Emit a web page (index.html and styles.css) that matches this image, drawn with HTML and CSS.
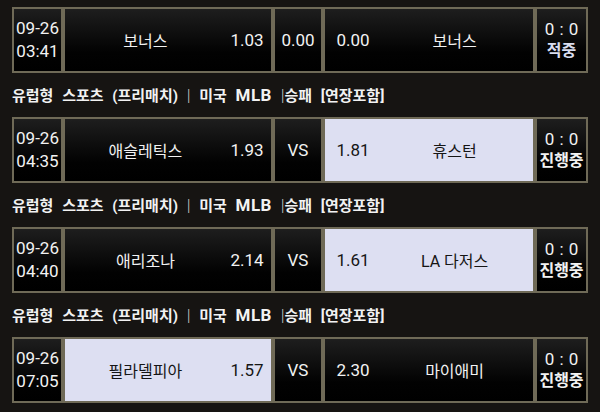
FILE: index.html
```html
<!DOCTYPE html>
<html lang="ko">
<head>
<meta charset="utf-8">
<link rel="stylesheet" href="styles.css">
</head>
<body>
<div class="list">
  <div class="match">
    <div class="cell time"><span>09-26</span><span>03:41</span></div>
    <div class="cell team home"><span class="name">보너스</span><span class="odds">1.03</span></div>
    <div class="cell vs">0.00</div>
    <div class="cell team away"><span class="odds">0.00</span><span class="name">보너스</span></div>
    <div class="cell score"><span class="num">0 : 0</span><span class="status hit">적중</span></div>
  </div>
  <div class="league">유럽형 스포츠 (프리매치) <span class="sep">|</span> 미국 <span class="latin">MLB</span> <span class="sep">|</span>승패 [연장포함]</div>

  <div class="match">
    <div class="cell time"><span>09-26</span><span>04:35</span></div>
    <div class="cell team home"><span class="name">애슬레틱스</span><span class="odds">1.93</span></div>
    <div class="cell vs">VS</div>
    <div class="cell team away picked"><span class="odds">1.81</span><span class="name">휴스턴</span></div>
    <div class="cell score"><span class="num">0 : 0</span><span class="status">진행중</span></div>
  </div>
  <div class="league">유럽형 스포츠 (프리매치) <span class="sep">|</span> 미국 <span class="latin">MLB</span> <span class="sep">|</span>승패 [연장포함]</div>

  <div class="match">
    <div class="cell time"><span>09-26</span><span>04:40</span></div>
    <div class="cell team home"><span class="name">애리조나</span><span class="odds">2.14</span></div>
    <div class="cell vs">VS</div>
    <div class="cell team away picked"><span class="odds">1.61</span><span class="name">LA 다저스</span></div>
    <div class="cell score"><span class="num">0 : 0</span><span class="status">진행중</span></div>
  </div>
  <div class="league">유럽형 스포츠 (프리매치) <span class="sep">|</span> 미국 <span class="latin">MLB</span> <span class="sep">|</span>승패 [연장포함]</div>

  <div class="match">
    <div class="cell time"><span>09-26</span><span>07:05</span></div>
    <div class="cell team home picked"><span class="name">필라델피아</span><span class="odds">1.57</span></div>
    <div class="cell vs">VS</div>
    <div class="cell team away"><span class="odds">2.30</span><span class="name">마이애미</span></div>
    <div class="cell score"><span class="num">0 : 0</span><span class="status">진행중</span></div>
  </div>
</div>
</body>
</html>
```
FILE: styles.css
```css
html, body {
  margin: 0;
  padding: 0;
  background: #161412;
}
body {
  width: 600px;
  height: 412px;
  overflow: hidden;
  font-family: Roboto, "Noto Sans CJK KR", sans-serif;
  color: #f2f2f2;
}
.list {
  padding: 7px 12px 0 12px;
}
.match {
  display: grid;
  grid-template-columns: 51px 210px 50px 212px 53px;
  height: 66px;
}
.cell {
  box-sizing: border-box;
  border: 2px solid #6f6a57;
  background: linear-gradient(#1e1e1e, #020202 70%, #000);
  display: flex;
  align-items: center;
  justify-content: center;
  font-size: 17px;
}
.time {
  flex-direction: column;
  line-height: 23px;
}
.team {
  display: grid;
  align-items: center;
}
.home {
  grid-template-columns: 170px 1fr;
}
.away {
  grid-template-columns: 1fr 170px;
}
.name {
  text-align: center;
  font-size: 16px;
}
.home .odds {
  text-align: right;
  padding-right: 12px;
}
.away .odds {
  text-align: left;
  padding-left: 18px;
}
.picked {
  background: #dddff2;
  color: #151515;
}
.score {
  flex-direction: column;
  line-height: 22px;
}
.num {
  word-spacing: 1px;
}
.status {
  font-size: 16px;
  font-weight: 700;
}
.status.hit {
  color: #d9ddef;
}
.league {
  height: 44px;
  line-height: 44px;
  font-size: 15px;
  font-weight: 700;
  white-space: pre;
  word-spacing: 5px;
}
.latin {
  font-size: 17px;
  letter-spacing: 0.5px;
}
.sep {
  font-weight: 300;
  color: #c9c9c9;
  font-size: 17px;
  word-spacing: 0;
}
```
